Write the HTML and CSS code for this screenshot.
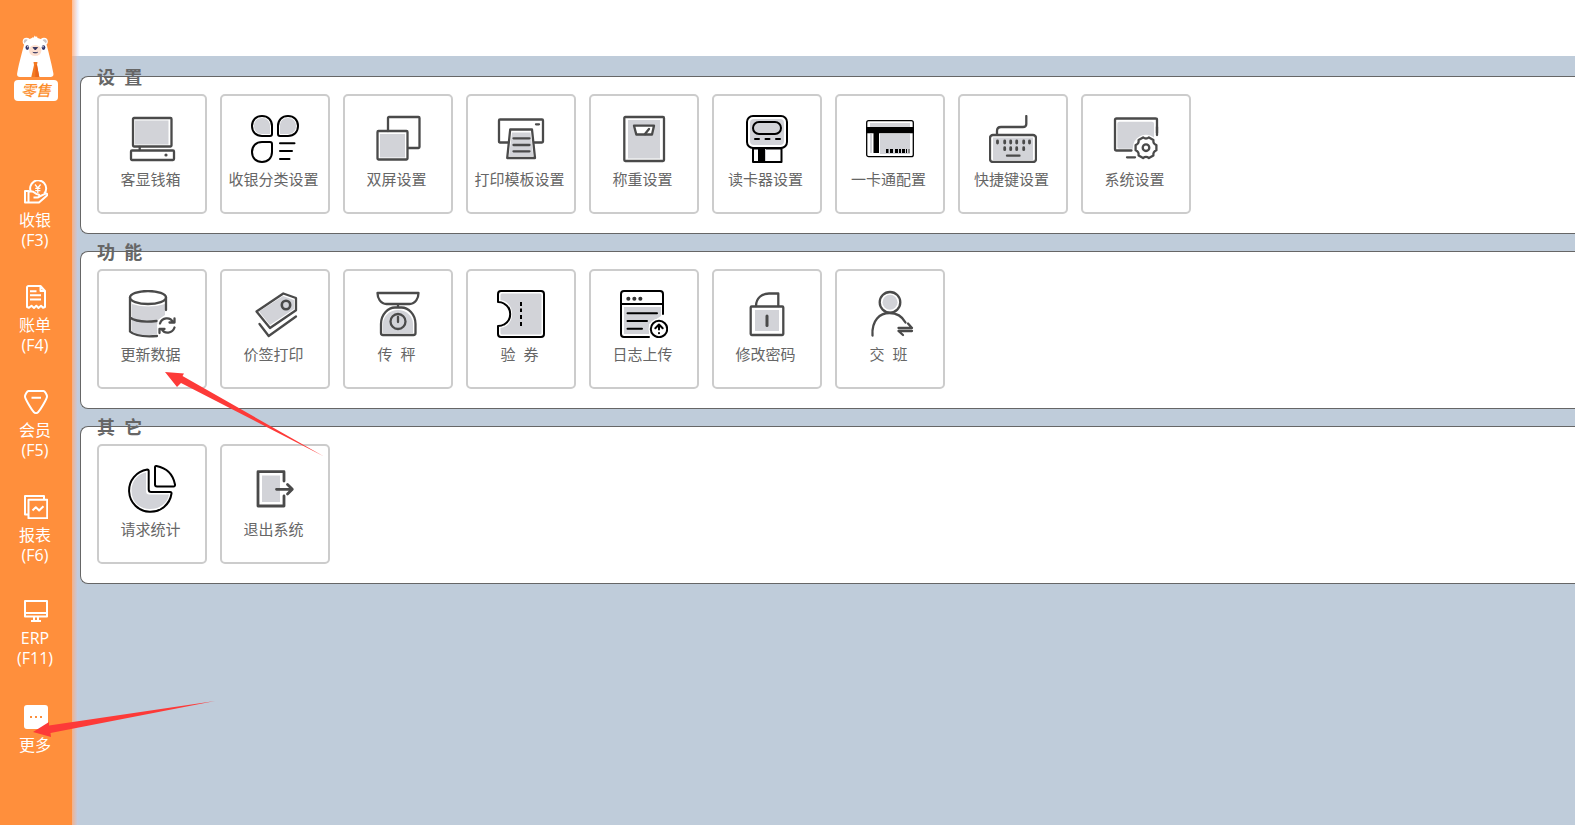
FILE: index.html
```html
<!DOCTYPE html>
<html lang="zh-CN">
<head>
<meta charset="utf-8">
<title>零售</title>
<meta name="viewport" content="width=device-width, initial-scale=1">
<link rel="stylesheet" href="styles.css">
</head>
<body>
<div class="app">
  <aside class="sidebar">
    <div class="logo">
      <svg class="logo-bear" viewBox="0 0 38 42" aria-hidden="true">
        <circle cx="9.500" cy="6.500" r="3.800" fill="#fff"/><circle cx="27" cy="6.500" r="3.800" fill="#fff"/>
        <circle cx="9" cy="6.500" r="2.200" fill="#c9c3c6"/><circle cx="27.500" cy="6.500" r="2.200" fill="#c9c3c6"/>
        <path d="M14 3.500 16.200 2l.6 1L17.500.5 19 2l1-.8.5 1.800C25 4 29 7 30 11c1.500 6 4 15 6.200 26.500C37 40.500 36 42 33.500 42H3C.5 42-.4 40.500.3 37.500 2.500 26 5.200 17 6.700 11 7.700 7 11 4 14 3.500Z" fill="#fff"/>
        <path d="M16.500 27h4l-.5 3 2.300 12h-8l2.700-12Z" fill="#f47a22"/>
        <path d="m18.500 30 1.500 0L22.300 42h-4Z" fill="#e9661b"/>
        <ellipse cx="18.200" cy="15.500" rx="6.200" ry="5.500" fill="#fde0d0"/>
        <path d="M16 12.500h4.600L18.300 15ZM15.800 17.200c1 .9 4 .9 5 0" fill="#33345f" stroke="#33345f" stroke-width=".9"/>
        <ellipse cx="10.300" cy="12.600" rx="1.800" ry="2.300" fill="#34366b"/><ellipse cx="26.500" cy="12.600" rx="1.800" ry="2.300" fill="#34366b"/>
        <circle cx="10.800" cy="11.700" r=".7" fill="#fff"/><circle cx="26" cy="11.700" r=".7" fill="#fff"/>
      </svg>
      <span class="logo-badge">零售</span>
    </div>
    <nav class="nav">
      <a class="nav-item" href="#cashier">
        <svg class="nav-icon" viewBox="0 0 24 24" aria-hidden="true"><path d="M1 11h3.500v11.500H1zM4.500 11.500H8c2.200 0 3 2.500 5.500 2.700 2.500 0 2.500 3.300 0 3.300H9.500M14.500 17l7-3.300c1.600-.6 2.400 1 1.200 2L15 22.500H4.500"/><path d="M6.800 11.500a8 8 0 1 1 13.500 2"/><path d="m11 4.500 2.800 3.500 2.800-3.500M13.800 8v5M11.200 8.300h5.200M11.200 10.700h5.200" stroke-width="1.300"/></svg>
        <span class="nav-label">收银</span><span class="nav-label">(F3)</span>
      </a>
      <a class="nav-item" href="#bills">
        <svg class="nav-icon" viewBox="0 0 24 24" aria-hidden="true"><path d="M16.500 1H4.500a1.500 1.500 0 0 0-1.500 1.500V22l2 .8 2.500-2 2.500 2.200 2.300-2.200 2.200 2.200 2.500-2.200 2 2 2-.8V6Zm0 0v5H21M6 6.300h6.500M6 10.300h11M6 14.600h11"/></svg>
        <span class="nav-label">账单</span><span class="nav-label">(F4)</span>
      </a>
      <a class="nav-item" href="#members">
        <svg class="nav-icon" viewBox="0 0 24 24" aria-hidden="true"><path d="M4.500 1h15c1.200 0 3.500 3.500 3.500 5.500 0 2.300-6.500 13-9 15.800-1.200 1.200-2.800 1.200-4 0C7.500 19.500 1 8.800 1 6.500 1 4.500 3.300 1 4.500 1ZM7.500 7.700h9.500"/></svg>
        <span class="nav-label">会员</span><span class="nav-label">(F5)</span>
      </a>
      <a class="nav-item" href="#reports">
        <svg class="nav-icon" viewBox="0 0 24 24" aria-hidden="true"><path d="M4.500 19.500H1V1h19v3.500M4.500 4.700h18.700v18.500H4.500zM8.500 15.500l3.300-3.300 3.300 3.300 4.400-4.300"/></svg>
        <span class="nav-label">报表</span><span class="nav-label">(F6)</span>
      </a>
      <a class="nav-item nav-item-latin" href="#erp">
        <svg class="nav-icon" viewBox="0 0 24 24" aria-hidden="true"><path d="M1 1h22v15.500H1zM1 13h22M10 17v4M14 17v4M7 21h10"/></svg>
        <span class="nav-label">ERP</span><span class="nav-label">(F11)</span>
      </a>
      <a class="nav-item" href="#more">
        <svg class="nav-icon" viewBox="0 0 24 24" aria-hidden="true"><rect width="24" height="24" rx="3" fill="#fff" stroke="none"/><path d="M6 12h2M11 12h2M16 12h2" stroke="#fc8e3b"/></svg>
        <span class="nav-label">更多</span>
      </a>
    </nav>
  </aside>

  <div class="page">
    <header class="topbar"></header>
    <main class="content">
      <section class="panel" aria-labelledby="t1">
        <h2 class="panel-title" id="t1">设&nbsp; 置</h2>
        <div class="tiles">
          <button class="tile" type="button">
            <svg class="icon" viewBox="0 0 48 48" aria-hidden="true"><path class="g" d="M7 5.500h33.500v24H7z"/><rect x="5" y="3" width="38.500" height="28.500" rx="1"/><rect x="3" y="35.500" width="43" height="9.500" rx="1"/><path d="M11.700 32v3"/><circle cx="38" cy="40" r="1.600" fill="#4a4a4a" stroke="none"/></svg>
            <span class="tile-label">客显钱箱</span>
          </button>
          <button class="tile" type="button">
            <svg class="icon k" viewBox="0 0 48 48" aria-hidden="true"><path class="g" d="M11 3c5 0 8 3.500 8 8v8h-8c-5 0-8-3.500-8-8s3-8 8-8ZM37 3c5 0 8 3.500 8 8s-3 8-8 8h-8v-8c0-5 3-8 8-8Z"/><path d="M11 1c6 0 10 4 10 10v8a2 2 0 0 1-2 2h-8C5 21 1 17 1 11S5 1 11 1ZM37 1c6 0 10 4 10 10s-4 10-10 10h-8a2 2 0 0 1-2-2v-8C27 5 31 1 37 1ZM11 27h8a2 2 0 0 1 2 2v8c0 6-4 10-10 10S1 43 1 37s4-10 10-10ZM29 28.300h14.500M29 36h12M29 44h9.500"/></svg>
            <span class="tile-label">收银分类设置</span>
          </button>
          <button class="tile" type="button">
            <svg class="icon" viewBox="0 0 48 48" aria-hidden="true"><path d="M14 16V3q0-1 1-1h29.500q1 0 1 1v29q0 1-1 1H34"/><path class="g" d="M6 19h25v23.500H6z"/><rect x="3.500" y="16" width="30" height="28.500" rx="1"/></svg>
            <span class="tile-label">双屏设置</span>
          </button>
          <button class="tile" type="button">
            <svg class="icon" viewBox="0 0 48 48" aria-hidden="true"><path d="M11 27.500H3q-1 0-1-1V5.500q0-1 1-1h42q1 0 1 1v21q0 1-1 1h-7.500M39 9.300h3"/><path class="g" d="M15 17.500h18.500l2.700 23.500H12z"/><path d="M13.200 14.500H35l3 28.500H10.200ZM16.500 23.300h16M16.500 30h16M16.500 36.300h16"/></svg>
            <span class="tile-label">打印模板设置</span>
          </button>
          <button class="tile" type="button">
            <svg class="icon" viewBox="0 0 48 48" aria-hidden="true"><path class="g" d="M8 5h32v38.500H8z"/><rect x="4.300" y="2" width="39.700" height="44" rx="1"/><path d="M14 10.700h20l-2 8.800H16.300Z" fill="#fff"/><path d="m29 14-4 5"/></svg>
            <span class="tile-label">称重设置</span>
          </button>
          <button class="tile" type="button">
            <svg class="icon k" viewBox="0 0 48 48" aria-hidden="true"><rect class="g" x="7" y="4" width="34" height="26" rx="4"/><rect x="4" y="1" width="40" height="32" rx="6"/><rect x="10" y="7" width="28" height="12" rx="6"/><path d="M12 24h4M22.500 24h4M33 24h4"/><path d="M10 33.500h28.500V47H10z"/><path d="M15 33.500h7V47h-7z" fill="#000" stroke="none"/><path d="M22 34h1v12h-1z" class="g"/></svg>
            <span class="tile-label">读卡器设置</span>
          </button>
          <button class="tile" type="button">
            <svg class="icon k" viewBox="0 0 48 48" aria-hidden="true"><path class="g" d="M4 8h40v4H4zM4 19h2v19H4zM14 19h30v20H14z"/><rect x=".7" y="5.700" width="46.600" height="36" rx="2" stroke-width="1.300"/><path d="M0 12h48v6.300H13V38H7.500V18.300H0z" fill="#000" stroke="none"/><path d="M20 34h2.500v4H20zM24 34h3v4h-3zM29 34h3v4h-3zM33 34h2v4h-2zM36 34h3v4h-3zM40 34h1v4h-1z" fill="#000" stroke="none"/><path d="M42 34h2v4h-2z" fill="#888" stroke="none"/></svg>
            <span class="tile-label">一卡通配置</span>
          </button>
          <button class="tile" type="button">
            <svg class="icon" viewBox="0 0 48 48" aria-hidden="true"><path d="M8 19.500V16c0-2.500 1.500-4 4-4h22c2 0 3.300-1 3.300-3V1"/><rect class="g" x="4" y="22.500" width="40" height="22.500"/><rect x="1" y="20" width="46" height="27" rx="3"/><path d="M8.500 26v2M15.700 26v2M21.700 26v2M27.700 26v2M34.700 26v2M40.500 26v2M15.700 32.700v2M21.700 32.700v2M27.700 32.700v2M34.700 32.700v2" stroke-width="2.800"/><path d="M18 40.700h12.500"/></svg>
            <span class="tile-label">快捷键设置</span>
          </button>
          <button class="tile" type="button">
            <svg class="icon" viewBox="0 0 48 48" aria-hidden="true"><rect class="g" x="5.300" y="6.700" width="36.700" height="27" rx="2"/><path d="M45 17V3.700Q45 2.500 43.500 2.500h-39Q3 2.500 3 4v29Q3 34.500 4.500 34.500H19.500" transform="translate(0 1)"/><path d="M15 42.300h8"/><g transform="translate(34 32.700)"><circle r="13" fill="#fff" stroke="none"/><path d="M10.400-2.600V2.600Q6.900 4 7.400 7.700L2.900 10.300Q0 8-2.900 10.300L-7.400 7.700Q-6.900 4-10.400 2.600V-2.600Q-6.900-4-7.400-7.700L-2.900-10.300Q0-8 2.900-10.300L7.400-7.700Q6.900-4 10.400-2.600Z"/><circle r="3.300"/></g><path d="M45 12v8"/></svg>
            <span class="tile-label">系统设置</span>
          </button>
        </div>
      </section>

      <section class="panel" aria-labelledby="t2">
        <h2 class="panel-title" id="t2">功&nbsp; 能</h2>
        <div class="tiles">
          <button class="tile" type="button">
            <svg class="icon" viewBox="0 0 48 48" aria-hidden="true"><path class="g" d="M4 14q16 5 33 0v11l-7 5-1 14q-13 3-25-1z"/><ellipse cx="20" cy="7.500" rx="18" ry="6.500"/><path d="M2 7.500v34Q8 47.500 29 46M38 7.500V20M2 27.500Q9 33 28.500 31"/><circle cx="39" cy="35.700" r="10" fill="#fff" stroke="none"/><path d="M32 33.500c2-6 10-7 13-1.500M46.500 28.500V32.500H41.500M46.500 37.500c-2 6-10 7-13 1.500M31.500 43V39H36.500"/></svg>
            <span class="tile-label">更新数据</span>
          </button>
          <button class="tile" type="button">
            <svg class="icon" viewBox="0 0 48 48" aria-hidden="true"><path class="g" d="m32 6 11 4v9L19 35 8 21.500z"/><path d="m32.300 3.500 12.700 4.500v12.300L19 38 5.500 21.500ZM8.500 34l9.200 12L45 26.500"/><circle cx="35" cy="15" r="4.200" stroke-width="2.600"/></svg>
            <span class="tile-label">价签打印</span>
          </button>
          <button class="tile" type="button">
            <svg class="icon" viewBox="0 0 48 48" aria-hidden="true"><path class="g" d="M9 43V34c0-8 7-14 15-14s15 6 15 14v9z"/><path d="M3.500 3h41c0 5-3 11-9 11h-23c-6 0-9-6-9-11ZM24 14v3.500M9 45q-2 0-2-2V34C7 24 14.500 17.500 21 17.500h6.500C34 17.500 41.500 24 41.500 34v9q0 2-2 2Z"/><circle cx="24" cy="31.500" r="7.500"/><path d="M24 27v5"/></svg>
            <span class="tile-label">传&nbsp; 秤</span>
          </button>
          <button class="tile" type="button">
            <svg class="icon k" viewBox="0 0 48 48" aria-hidden="true"><path class="g" d="M3.500 5q0-1.500 1.500-1.500h38q1.500 0 1.500 1.500v38q0 1.500-1.500 1.500H5q-1.500 0-1.500-1.500v-5C19 36 19 12 3.500 10z"/><path d="M1 12V4q0-3 3-3h40q3 0 3 3v40q0 3-3 3H4q-3 0-3-3v-8q3.500 0 6-1.500a12 12 0 0 0 0-21Q4.500 12 1 12Z"/><path d="M24 12v4M24 18.500v3.500M24 25v4M24 32v4" stroke-linecap="butt"/></svg>
            <span class="tile-label">验&nbsp; 券</span>
          </button>
          <button class="tile" type="button">
            <svg class="icon k" viewBox="0 0 48 48" aria-hidden="true"><path class="g" d="M4 17h37v9L29 34v10H4z"/><path d="M43 24V4q0-3-3-3H4Q1 1 1 4v40q0 3 3 3h25M1 14h42M7.500 23.300H37M7.500 31H27M7.500 38.700H22"/><path d="M8.300 8.700h.1M14.300 8.700h.1M20.300 8.700h.1" stroke="#333" stroke-width="4"/><circle cx="39" cy="39" r="10.500" fill="#fff" stroke="none"/><circle cx="39" cy="39" r="8.200"/><path d="m35.300 38.300 3.700-3.800 3.700 3.800M39 35v4.500M39 43v.2"/></svg>
            <span class="tile-label">日志上传</span>
          </button>
          <button class="tile" type="button">
            <svg class="icon" viewBox="0 0 48 48" aria-hidden="true"><path class="g" d="M12 20h24v21H12z"/><rect x="7.700" y="16.500" width="32.600" height="28.500" rx="1"/><path d="M13 16C13 8 19 3.500 26 3.500h9.300V16"/><path d="M24 26v9.500" stroke-width="3"/></svg>
            <span class="tile-label">修改密码</span>
          </button>
          <button class="tile" type="button">
            <svg class="icon" viewBox="0 0 48 48" aria-hidden="true"><circle class="g" cx="24" cy="12.300" r="7.500"/><circle cx="24" cy="12.300" r="10.300"/><path d="M6.500 45.500C5.500 30 14 23 23.500 23c7 0 13 4 16 9.500M32.500 38h13.500L42 33.500M46 41H32.500l4.500 4"/></svg>
            <span class="tile-label">交&nbsp; 班</span>
          </button>
        </div>
      </section>

      <section class="panel" aria-labelledby="t3">
        <h2 class="panel-title" id="t3">其&nbsp; 它</h2>
        <div class="tiles">
          <button class="tile" type="button">
            <svg class="icon k" viewBox="0 0 48 48" aria-hidden="true"><path class="g" d="M18 7.500V26q0 3.500 3.500 3.500H41C38 49 4 50 3.500 26 3.500 16 10 8.500 18 7.500Z"/><path d="M19.200 4.500q1.500 0 1.500 1.500v18.500q0 2.500 2.500 2.500h19q1.500 0 1.300 1.500A21.300 21.300 0 1 1 19.200 4.500ZM27 2.500Q27 .8 28.500 1 44 4 47 19.500q.2 2-1.500 2H29q-2 0-2-2Z"/></svg>
            <span class="tile-label">请求统计</span>
          </button>
          <button class="tile" type="button">
            <svg class="icon" viewBox="0 0 48 48" aria-hidden="true"><path class="g" d="M11 10.500h18V37H11z"/><path d="M33 16V6.700H7V41h26V31M25.500 24.300h15.500M36.500 19.500l4.800 4.800-4.800 4.800" stroke-width="2.800"/></svg>
            <span class="tile-label">退出系统</span>
          </button>
        </div>
      </section>
    </main>
  </div>

  <svg class="pointer pointer-update" viewBox="0 0 160 86" aria-hidden="true"><path d="M0 0 19 1.500 17.500 4 159 84.500 16 11 12 15Z"/></svg>
  <svg class="pointer pointer-more" viewBox="0 0 182 36" aria-hidden="true"><path d="M0 31 16 21v3.500L182 0 17.500 32l.5 4Z"/></svg>
</div>
</body>
</html>
```
FILE: styles.css
```css
* {
  box-sizing: border-box;
}

body {
  margin: 0;
  background: #bfccda;
  color: #666;
  font-family: "Open Sans", "Noto Sans CJK SC", sans-serif;
  overflow-x: hidden;
}

.app {
  position: relative;
  display: flex;
  min-height: 100vh;
}

.sidebar {
  position: relative;
  flex: 0 0 72px;
  display: flex;
  flex-direction: column;
  align-items: center;
  padding-top: 35px;
  background: #ff8f3c;
}

.sidebar::after {
  content: "";
  position: absolute;
  top: 0;
  bottom: 0;
  left: 100%;
  width: 8px;
  background: linear-gradient(to right, rgba(255, 170, 120, 0.8), rgba(200, 200, 235, 0.3) 70%, transparent);
}

.logo {
  display: flex;
  flex-direction: column;
  align-items: center;
  gap: 3px;
}

.logo-bear {
  width: 38px;
  height: 42px;
}

.logo-badge {
  width: 44px;
  border-radius: 4px;
  background: #fff;
  color: #fc8e2c;
  font-size: 15px;
  font-style: italic;
  font-weight: 500;
  line-height: 21px;
  text-align: center;
}

.nav {
  display: flex;
  flex-direction: column;
  gap: 35px;
  width: 100%;
  margin-top: 79px;
}

.nav-item {
  display: flex;
  flex-direction: column;
  align-items: center;
  min-height: 70px;
  color: #fff;
  font-size: 16px;
  line-height: 20px;
  text-decoration: none;
}

.nav-icon {
  width: 24px;
  height: 24px;
  margin-bottom: 6px;
  fill: none;
  stroke: #fff;
  stroke-width: 2;
  stroke-linejoin: round;
}

.nav-item-latin .nav-icon {
  margin-bottom: 4px;
}

.nav-label {
  padding-right: 2px;
}

.page {
  flex: 1;
  min-width: 0;
}

.topbar {
  height: 56px;
  background: #fff;
}

.content {
  display: flex;
  flex-direction: column;
  gap: 17px;
  padding: 20px 0 20px 8px;
}

.panel {
  position: relative;
  padding: 17px 16px 19px;
  border: 1px solid #666;
  border-right: 0;
  border-radius: 8px 0 0 8px;
  background: #fff;
}

.panel-title {
  position: absolute;
  top: -12px;
  left: 16px;
  margin: 0;
  font-size: 18px;
  font-weight: 700;
  line-height: 24px;
}

.tiles {
  display: flex;
  flex-wrap: wrap;
  gap: 13px;
}

.tile {
  display: flex;
  flex-direction: column;
  align-items: center;
  width: 110px;
  height: 120px;
  padding: 19px 0 0;
  border: 2px solid #ccc;
  border-radius: 5px;
  background: #fff;
  color: inherit;
  font-family: inherit;
  font-size: 15px;
  line-height: 20px;
}

.tile-label {
  margin-top: 6px;
  padding-right: 3px;
}

.icon {
  width: 48px;
  height: 48px;
  fill: none;
  stroke: #4a4a4a;
  stroke-width: 2.3;
  stroke-linecap: round;
  stroke-linejoin: round;
}

.icon.k {
  stroke: #000;
  stroke-width: 2;
}

.icon .g {
  fill: #d2d3d8;
  stroke: none;
}

.pointer {
  position: absolute;
  fill: #fd3a38;
  pointer-events: none;
}

.pointer-update {
  top: 372px;
  left: 165px;
  width: 160px;
  height: 86px;
}

.pointer-more {
  top: 701px;
  left: 33px;
  width: 182px;
  height: 36px;
}
```
